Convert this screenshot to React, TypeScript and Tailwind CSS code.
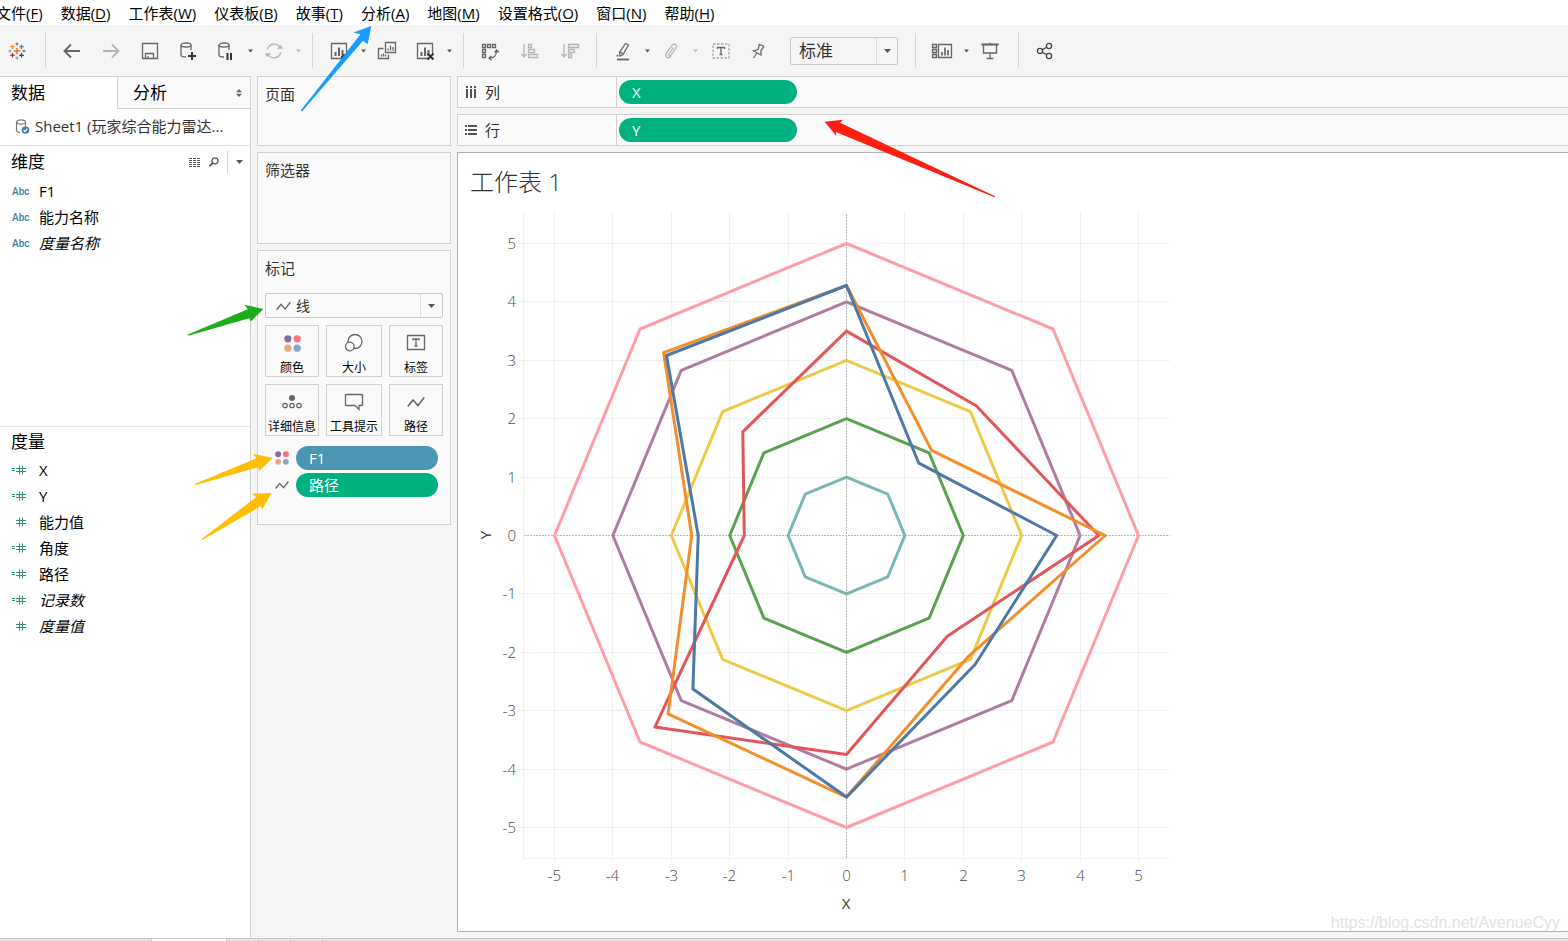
import type { ReactNode } from 'react'

const menus = [
  ['文件', 'F'],
  ['数据', 'D'],
  ['工作表', 'W'],
  ['仪表板', 'B'],
  ['故事', 'T'],
  ['分析', 'A'],
  ['地图', 'M'],
  ['设置格式', 'O'],
  ['窗口', 'N'],
  ['帮助', 'H'],
]

const dimensions = [
  { name: 'F1' },
  { name: '能力名称' },
  { name: '度量名称', generated: true },
]

const measures = [
  { name: 'X', calc: true },
  { name: 'Y', calc: true },
  { name: '能力值' },
  { name: '角度', calc: true },
  { name: '路径', calc: true },
  { name: '记录数', calc: true, generated: true },
  { name: '度量值', generated: true },
]

// radius per axis, counter-clockwise starting from the positive x axis
const series = [
  { color: '#ff9da7', r: [5, 5, 5, 5, 5, 5, 5, 5] },
  { color: '#b07aa1', r: [4, 4, 4, 4, 4, 4, 4, 4] },
  { color: '#edc948', r: [3, 3, 3, 3, 3, 3, 3, 3] },
  { color: '#59a14f', r: [2, 2, 2, 2, 2, 2, 2, 2] },
  { color: '#76b7b2', r: [1, 1, 1, 1, 1, 1, 1, 1] },
  { color: '#e15759', r: [4.32, 3.14, 3.5, 2.51, 1.75, 4.64, 3.75, 2.44] },
  { color: '#f28e2b', r: [4.43, 2.06, 4.28, 4.43, 2.65, 4.32, 4.48, 2.94] },
  { color: '#4e79a7', r: [3.6, 1.75, 4.28, 4.36, 2.54, 3.72, 4.48, 3.12] },
]

const ticks = [-5, -4, -3, -2, -1, 0, 1, 2, 3, 4, 5]
const UNIT = 58.4
const CX = 376.5
const CY = 330.5
const tickX = (v: number) => Math.round(CX - 0.5 + v * UNIT) + 0.5
const tickY = (v: number) => Math.round(CY - 0.5 - v * UNIT) + 0.5

function polygon(r: number[]) {
  return r
    .map((v, i) => {
      const a = (i * Math.PI) / 4
      return `${(CX + Math.cos(a) * v * UNIT).toFixed(1)},${(CY - Math.sin(a) * v * UNIT).toFixed(1)}`
    })
    .join(' ')
}

function Icon({ children, w = 20, h = 20, color = '#666666' }: { children: ReactNode; w?: number; h?: number; color?: string }) {
  return (
    <svg width={w} height={h} viewBox={`0 0 ${w} ${h}`} fill="none" stroke={color} strokeWidth="1.3" aria-hidden="true">
      {children}
    </svg>
  )
}

function Caret({ light = false }: { light?: boolean }) {
  return (
    <svg width="5" height="4" viewBox="0 0 5 4" fill={light ? '#b8b8b8' : '#555555'} aria-hidden="true">
      <path d="M0 .5h5L2.5 3.5z" />
    </svg>
  )
}

function Tool({ label, children }: { label: string; children: ReactNode }) {
  return (
    <button aria-label={label} className="flex h-9 w-9 items-center justify-center">
      {children}
    </button>
  )
}

function More({ label, light }: { label: string; light?: boolean }) {
  return (
    <button aria-label={label} className="flex h-9 w-3 items-center justify-center">
      <Caret light={light} />
    </button>
  )
}

function Separator() {
  return <div className="mx-2 h-[35px] w-px bg-[#d4d4d4]" />
}

function Cylinder() {
  return (
    <>
      <ellipse cx="8" cy="4" rx="5" ry="2" />
      <path d="M3 4v10c0 1.200 2 2 5 2M13 4v5" />
    </>
  )
}

function BarsBox() {
  return (
    <>
      <path d="M13 17.500H2.500v-15h15V13" />
      <path d="M6.500 15v-4M10 15V6.500M13.500 15V9" strokeWidth="2" />
    </>
  )
}

function ColorDots({ size }: { size: number }) {
  return (
    <svg width={size} height={size} viewBox="0 0 16 16" aria-hidden="true">
      <circle cx="3.600" cy="3.600" r="3.400" fill="#86709a" />
      <circle cx="12.400" cy="3.600" r="3.400" fill="#f97186" />
      <circle cx="3.600" cy="12.400" r="3.400" fill="#f2a47c" />
      <circle cx="12.400" cy="12.400" r="3.400" fill="#82a6cd" />
    </svg>
  )
}

function LineIcon({ w = 15, h = 10 }: { w?: number; h?: number }) {
  return (
    <svg width={w} height={h} viewBox="0 0 18 12" fill="none" stroke="#666666" strokeWidth="1.600" aria-hidden="true">
      <path d="M.8 10.500 6 4l5 5.500L17.200 1.500" />
    </svg>
  )
}

function TableauLogo() {
  return (
    <svg width="18" height="18" viewBox="0 0 18 18" fill="none" strokeWidth="1.300" aria-hidden="true">
      <path d="M9 5.800v6.400M5.800 9h6.400" stroke="#e8762c" strokeWidth="1.500" />
      <path d="M4.500 2.500v4.500M2.200 4.700h4.600" stroke="#eb912c" />
      <path d="M13.500 2.500v4.500M11.200 4.700h4.600" stroke="#59879b" />
      <path d="M4.500 11v4.500M2.200 13.300h4.600" stroke="#c72035" />
      <path d="M13.500 11v4.500M11.200 13.300h4.600" stroke="#1f447e" />
      <path d="M9 .5v3M7.500 2h3" stroke="#5b6591" strokeWidth="1" />
      <path d="M9 14.500v3M7.500 16h3" stroke="#7199a6" strokeWidth="1" />
      <path d="M2 7.500v3M.5 9h3" stroke="#7199a6" strokeWidth="1" />
      <path d="M16 7.500v3M14.500 9h3" stroke="#5b6591" strokeWidth="1" />
    </svg>
  )
}

function Toolbar() {
  return (
    <div className="flex h-[51px] shrink-0 items-center">
      <button aria-label="Tableau" className="mr-1 flex h-9 w-[33px] items-center justify-center">
        <TableauLogo />
      </button>
      <Separator />
      <div className="mr-0.5 flex gap-[3px]">
        <Tool label="撤消">
          <Icon><path d="M18 10H3M9 3.500 2.500 10 9 16.500" strokeWidth="1.900" /></Icon>
        </Tool>
        <Tool label="重做">
          <Icon color="#b4b4b4"><path d="M2 10h15M11 3.500l6.500 6.500-6.500 6.500" strokeWidth="1.900" /></Icon>
        </Tool>
        <Tool label="保存">
          <Icon>
            <path d="M2.500 2.500h15v15h-15z" />
            <path d="M5.500 17.500v-5h8v5M8 17.500V15" />
          </Icon>
        </Tool>
      </div>
      <div className="flex gap-0.5">
        <Tool label="新建数据源">
          <Icon>
            <Cylinder />
            <path d="M14 11v8M10 15h8" stroke="#333333" strokeWidth="2" />
          </Icon>
        </Tool>
        <Tool label="暂停自动更新">
          <Icon>
            <Cylinder />
            <path d="M11.500 12v7M15 12v7" stroke="#333333" strokeWidth="2" />
          </Icon>
        </Tool>
      </div>
      <More label="更新选项" />
      <Tool label="运行更新">
        <Icon color="#b4b4b4">
          <path d="M3.300 8.500a7 7 0 0 1 13-1.500M16.700 11.500a7 7 0 0 1-13 1.500" />
          <path d="M13.500 7.500h5L17 4.300zM6.500 12.500h-5L3 15.700z" fill="#b4b4b4" strokeWidth=".5" />
        </Icon>
      </Tool>
      <More label="运行选项" light />
      <Separator />
      <Tool label="新建工作表">
        <Icon>
          <BarsBox />
          <path d="M15 13v6M12 16h6" stroke="#333333" strokeWidth="2" />
        </Icon>
      </Tool>
      <More label="新建选项" />
      <div className="flex gap-0.5">
        <Tool label="复制工作表">
          <Icon>
            <path d="M8.500 1.500h10v10h-10zM6.500 7.500h-5v10h10v-4" />
            <path d="M11 9.500v-2M13.500 9.500v-5M16 9.500V6M4.500 15.500v-2M6.500 15.500v-3M8.500 15.500v-2" />
          </Icon>
        </Tool>
        <Tool label="清除工作表">
          <Icon>
            <BarsBox />
            <path d="m12.500 12.500 6 6M18.500 12.500l-6 6" stroke="#333333" strokeWidth="2" />
          </Icon>
        </Tool>
      </div>
      <More label="清除选项" />
      <Separator />
      <div className="flex gap-1">
        <Tool label="交换行和列">
          <Icon>
            <path d="M2.500 3.500h3v3h-3zM7.500 3.500h3v3h-3zM12.500 3.500h3v3h-3zM2.500 8.500h3v3h-3zM2.500 13.500h3v3h-3z" />
            <path d="M9.500 17c4 0 7-2.500 7-7M14.500 11.500l2.200-2.500 2.200 2.500M11.500 15 9 17l2.500 2.200" />
          </Icon>
        </Tool>
        <Tool label="升序排序">
          <Icon color="#b4b4b4">
            <path d="M4 3v12M1.500 13l2.500 3 2.500-3M8.500 3.500h3v3h-3zM8.500 8.500h6v3h-6zM8.500 13.500h9v3h-9z" />
          </Icon>
        </Tool>
        <Tool label="降序排序">
          <Icon color="#b4b4b4">
            <path d="M4 3v12M1.500 13l2.500 3 2.500-3M8.500 3.500h10v3h-10zM8.500 8.500h6v3h-6zM8.500 13.500h3v3h-3z" />
          </Icon>
        </Tool>
      </div>
      <Separator />
      <Tool label="突出显示">
        <Icon>
          <path d="M12.500 2.500 15.500 4 10 13.500l-3 1.500-.500-3.500zM7 11l3.500 2M3.500 15l2-.500" />
          <path d="M4 18.500h12" strokeWidth="1.800" />
        </Icon>
      </Tool>
      <More label="突出显示选项" />
      <Tool label="分组成员">
        <Icon color="#b4b4b4">
          <path d="M12.500 6.500 8 13c-1 1.500 1 2.500 2 1.200l5-7.200c2-3-2-5.500-4-2.600L5.500 12c-2.300 3.600 2.200 6.500 4.500 3.200" />
        </Icon>
      </Tool>
      <More label="分组选项" light />
      <div className="ml-0.5 flex gap-0.5">
        <Tool label="显示标记标签">
          <Icon>
            <path d="M2 3h16v14H2z" stroke="#a5a5a5" strokeDasharray="2.500 1.500" />
            <path d="M6.500 8V6.500h7V8M10 6.500v7M8.500 13.500h3" />
          </Icon>
        </Tool>
        <Tool label="固定轴">
          <Icon>
            <path d="m9.500 3 5.500 2.500M10.500 3.500l-1.500 5L4.500 10l7.500 4v-4.500l3-4M8 12l-3.500 5" />
          </Icon>
        </Tool>
      </div>
      <div className="relative mr-[9px] ml-[13px]">
        <select
          aria-label="适合"
          className="h-7 w-[108px] appearance-none rounded-xs border border-[#c8c8c8] bg-[#f5f5f5] pl-2 text-[17px] leading-6 text-[#333333]"
        >
          <option>标准</option>
        </select>
        <span className="pointer-events-none absolute inset-y-px right-px flex w-[21px] items-center justify-center border-l border-[#dcdcdc]">
          <svg width="7" height="4" viewBox="0 0 7 4" fill="#555555"><path d="M0 0h7L3.500 4z" /></svg>
        </span>
      </div>
      <Separator />
      <Tool label="智能推荐">
        <Icon w={22}>
          <path d="M7.500 3.500h13v13h-13zM1.500 3.500h4v3h-4zM1.500 8.500h4v3h-4zM1.500 13.500h4v3h-4z" />
          <path d="M11 14.500V11M14 14.500V6.500M17 14.500V9" strokeWidth="1.700" />
        </Icon>
      </Tool>
      <More label="智能推荐选项" />
      <div className="mr-0.5 flex">
        <Tool label="演示模式">
          <Icon>
            <path d="M1.500 3.500h17M3.500 3.500v8.500h13V3.500M10 1.800V3.500M10 12v5.500M6.500 17.500h7" />
            <path d="M1.500 3.500h17" strokeWidth="1.800" />
          </Icon>
        </Tool>
      </div>
      <Separator />
      <Tool label="共享">
        <Icon color="#444444">
          <circle cx="5" cy="10" r="2.600" />
          <circle cx="14" cy="5" r="2.600" />
          <circle cx="14" cy="15" r="2.600" />
          <path d="m7.300 8.800 4.500-2.600M7.300 11.200l4.500 2.600" />
        </Icon>
      </Tool>
    </div>
  )
}

function NumberIcon({ calc }: { calc?: boolean }) {
  return (
    <svg width="15" height="12" viewBox="0 0 15 12" fill="none" stroke="#2f9470" aria-hidden="true">
      {calc && <path d="M0 4.500h3M0 6.500h3" />}
      <path d="M4 4.500h10M4 7.500h10M7.500 1.500v9M10.500 1.500v9" />
    </svg>
  )
}

function Field({ icon, name, generated }: { icon: ReactNode; name: string; generated?: boolean }) {
  return (
    <li className="flex h-[26px] items-center pl-3">
      <span className="flex w-[27px] items-center">{icon}</span>
      <span className={generated ? 'italic' : ''}>{name}</span>
    </li>
  )
}

function DataPane() {
  return (
    <aside className="flex w-[251px] shrink-0 flex-col border-t border-r border-[#d0d0d0] bg-white text-black">
      <div className="flex h-8 text-[17px]">
        <button className="w-[117px] pl-[11px] text-left">数据</button>
        <button className="flex flex-1 items-center justify-between border-b border-l border-[#d0d0d0] bg-[#fafafa] pr-2 pl-[15px]">
          分析
          <svg width="6" height="8" viewBox="0 0 6 8" fill="#5f6b78" aria-hidden="true">
            <path d="M0 3.200h6L3 0zM0 4.800h6L3 8z" />
          </svg>
        </button>
      </div>
      <div className="flex h-[37px] items-center border-b border-[#e2e2e2] pb-0.5 pl-[15px] text-[#333333]">
        <svg width="15" height="17" viewBox="0 0 15 17" fill="none" stroke="#777777" strokeWidth="1.200" aria-hidden="true">
          <ellipse cx="6" cy="4" rx="4.500" ry="2.200" />
          <path d="M1.500 4v8.500c0 1 1.500 1.800 3.500 2M10.500 4v4" />
          <circle cx="10.500" cy="12" r="3.800" fill="#3b7f9b" stroke="none" />
          <path d="m8.600 12 1.400 1.500 2.400-2.800" stroke="white" />
        </svg>
        <span className="ml-[5px]">Sheet1 (玩家综合能力雷达...</span>
      </div>
      <section className="h-[281px] border-b border-[#e2e2e2]">
        <div className="flex h-8 items-center pl-[11px]">
          <h2 className="flex-1 text-[17px]">维度</h2>
          <button aria-label="查看数据">
            <svg width="12" height="9" viewBox="0 0 12 9" fill="none" stroke="#555555" aria-hidden="true">
              <path d="M0 .5h12M0 2.500h12M0 4.500h12M0 6.500h12M0 8.500h12" strokeDasharray="3 1" strokeDashoffset="0" />
            </svg>
          </button>
          <button aria-label="查找字段" className="ml-2">
            <svg width="10" height="10" viewBox="0 0 10 10" fill="none" stroke="#555555" strokeWidth="1.300" aria-hidden="true">
              <circle cx="6" cy="3.800" r="3" />
              <path d="M3.800 6 .5 9.300" strokeWidth="1.700" />
            </svg>
          </button>
          <span className="ml-2 h-[22px] w-px bg-[#d0d0d0]" />
          <button aria-label="菜单" className="mr-[7px] ml-2">
            <svg width="7" height="4" viewBox="0 0 7 4" fill="#555555"><path d="M0 0h7L3.500 4z" /></svg>
          </button>
        </div>
        <ul>
          {dimensions.map((d) => (
            <Field
              key={d.name}
              name={d.name}
              generated={d.generated}
              icon={<span className="font-[Roboto] text-[10px] font-medium text-[#3b7f9b]">Abc</span>}
            />
          ))}
        </ul>
      </section>
      <section>
        <h2 className="flex h-[30px] items-center pl-[11px] text-[17px]">度量</h2>
        <ul>
          {measures.map((m) => (
            <Field key={m.name} name={m.name} generated={m.generated} icon={<NumberIcon calc={m.calc} />} />
          ))}
        </ul>
      </section>
    </aside>
  )
}

function Card({ title, className, children }: { title: string; className: string; children?: ReactNode }) {
  return (
    <section className={`border border-[#d0d0d0] bg-[#fafafa] px-[7px] py-1.5 ${className}`}>
      <h2 className="leading-[22px]">{title}</h2>
      {children}
    </section>
  )
}

function MarkButton({ label, children }: { label: string; children: ReactNode }) {
  return (
    <button className="flex h-[52px] flex-col items-center border border-[#d0d0d0] bg-[#fafafa] text-xs whitespace-nowrap text-black">
      <span className="flex h-[34px] items-center">{children}</span>
      <span className="leading-4">{label}</span>
    </button>
  )
}

function Cards() {
  return (
    <div className="flex w-[194px] shrink-0 flex-col gap-1.5 text-[#333333]">
      <Card title="页面" className="h-[70px]" />
      <Card title="筛选器" className="h-[92px]" />
      <Card title="标记" className="h-[275px]">
        <div className="relative mt-3.5">
          <select
            aria-label="标记类型"
            className="block h-[25px] w-full appearance-none rounded-xs border border-[#c8c8c8] bg-[#fafafa] pl-[30px] text-sm leading-5"
          >
            <option>线</option>
          </select>
          <span className="pointer-events-none absolute inset-y-0 left-[11px] flex items-center">
            <LineIcon />
          </span>
          <span className="pointer-events-none absolute inset-y-px right-px flex w-[22px] items-center justify-center border-l border-[#dcdcdc]">
            <svg width="7" height="4" viewBox="0 0 7 4" fill="#555555"><path d="M0 0h7L3.500 4z" /></svg>
          </span>
        </div>
        <div className="mt-[7px] grid grid-cols-[54px_56px_54px] justify-between gap-y-[7px]">
          <MarkButton label="颜色"><ColorDots size={17} /></MarkButton>
          <MarkButton label="大小">
            <Icon>
              <circle cx="11" cy="8.500" r="7" />
              <circle cx="5.800" cy="13.500" r="4.300" fill="#fafafa" />
            </Icon>
          </MarkButton>
          <MarkButton label="标签">
            <Icon>
              <path d="M1.500 2.500h17v14h-17z" />
              <path d="M7 7.500V6h6v1.500M10 6v7M8.500 13h3" />
            </Icon>
          </MarkButton>
          <MarkButton label="详细信息">
            <Icon>
              <circle cx="10" cy="6" r="3" fill="#666666" stroke="none" />
              <circle cx="3" cy="13.500" r="2.200" />
              <circle cx="10" cy="13.500" r="2.200" />
              <circle cx="17" cy="13.500" r="2.200" />
            </Icon>
          </MarkButton>
          <MarkButton label="工具提示">
            <Icon>
              <path d="M2.500 2.500h15a1 1 0 0 1 1 1v9a1 1 0 0 1-1 1h-2.500v4l-4-4H2.500a1 1 0 0 1-1-1v-9a1 1 0 0 1 1-1z" />
            </Icon>
          </MarkButton>
          <MarkButton label="路径"><LineIcon w={18} h={12} /></MarkButton>
        </div>
        <ul className="mt-2.5 flex flex-col gap-[3px] pr-[5px] pl-2.5 text-white">
          <li className="flex items-center gap-[7px]">
            <ColorDots size={14} />
            <button className="h-6 flex-1 rounded-full bg-[#4a96b3] pl-[13px] text-left">F1</button>
          </li>
          <li className="flex items-center gap-[7px]">
            <LineIcon w={14} h={10} />
            <button className="h-6 flex-1 rounded-full bg-[#00b180] pl-[13px] text-left">路径</button>
          </li>
        </ul>
      </Card>
    </div>
  )
}

function Shelf({ label, field, icon }: { label: string; field: string; icon: ReactNode }) {
  return (
    <div className="flex h-8 items-center border border-r-0 border-[#d0d0d0] bg-[#fafafa] text-[#333333]">
      <div className="flex h-full w-[159px] items-center gap-2 border-r border-[#d0d0d0] pl-1.5">
        {icon}
        {label}
      </div>
      <button className="ml-0.5 h-6 w-[178px] rounded-full bg-[#00b180] pl-[13px] text-left text-white">{field}</button>
    </div>
  )
}

function RadarChart() {
  return (
    <svg width="710" height="715" viewBox="0 0 710 715" className="ml-3 shrink-0" role="img" aria-label="工作表 1">
      <g stroke="#f0f0f0" fill="none">
        <path d="M53.500 7v646.500H700" />
        {ticks.map((t) => (
          <g key={t}>
            {t !== 0 && <path d={`M${tickX(t)} 7V657`} />}
            {t !== 0 && <path d={`M49 ${tickY(t)}H700`} />}
          </g>
        ))}
      </g>
      <path d="M376.500 9V653M54 330.500H700" stroke="#b8b8b8" strokeDasharray="2 1" />
      <g fill="none" strokeWidth="3" strokeLinejoin="round">
        {series.map((s) => (
          <polygon key={s.color} points={polygon(s.r)} stroke={s.color} />
        ))}
      </g>
      <g className="fill-[#4a4a4a] text-[15px] font-light">
        {ticks.map((t) => (
          <text key={t} x={tickX(t)} y="676" textAnchor="middle">{t}</text>
        ))}
        {ticks.map((t) => (
          <text key={t} x="46" y={tickY(t) + 5} textAnchor="end">{t}</text>
        ))}
      </g>
      <g className="fill-[#333333] text-[15px]" textAnchor="middle">
        <text x="376" y="704">X</text>
        <text transform="translate(21 330) rotate(-90)">Y</text>
      </g>
    </svg>
  )
}

// Coloured arrows drawn over the window
function Arrows() {
  return (
    <svg width="1000" height="550" viewBox="0 0 1000 550" className="pointer-events-none absolute top-0 left-0" aria-hidden="true">
      <path d="M371.300 26 353.500 32.500l7 1.800L300.700 110.500l1.300 1 61-70.700 4.700 3.500z" fill="#1a9cff" />
      <path d="M824.700 121.700 843 119.800l-3 3 155 73.500-.500 1-158.700-65.300.700 4.300z" fill="#ff1e10" />
      <path d="M263.500 309 244.300 304.800l3.500 4.500-60 25.300.500 1.200 61-17.500 1.500 3.200z" fill="#1cad19" />
      <path d="M272.500 458 253 453.800l3.500 4.500-61.800 25.700.500 1.200L258 467.200l1.300 3.700z" fill="#ffbf00" />
      <path d="M271.500 493 252 493.500l4 3.700-54.300 41.800.800 1 58.500-34 1.300 3.300z" fill="#ffbf00" />
    </svg>
  )
}

export default function App() {
  return (
    <div className="relative flex h-screen flex-col overflow-hidden bg-[#f5f5f5] font-['Open_Sans','Noto_Sans_CJK_SC',sans-serif] text-[15px]">
      <nav className="-ml-1 flex h-[25px] shrink-0 items-center gap-[18px] bg-white pt-0.5 whitespace-nowrap text-black">
        {menus.map(([name, key]) => (
          <button key={key}>
            {name}(<span className="underline underline-offset-2">{key}</span>)
          </button>
        ))}
      </nav>
      <Toolbar />
      <div className="flex min-h-0 flex-1 gap-1.5">
        <DataPane />
        <Cards />
        <main className="flex min-w-0 flex-1 flex-col gap-1.5 pb-1.5">
          <Shelf
            label="列"
            field="X"
            icon={
              <svg width="13" height="12" viewBox="0 0 13 12" fill="none" stroke="#555555" strokeWidth="2" aria-hidden="true">
                <path d="M3 0v2M3 3v9M7 0v2M7 3v9M11 0v2M11 3v9" />
              </svg>
            }
          />
          <Shelf
            label="行"
            field="Y"
            icon={
              <svg width="13" height="12" viewBox="0 0 13 12" fill="none" stroke="#555555" strokeWidth="2" aria-hidden="true">
                <path d="M1 2h2M4 2h9M1 6h2M4 6h9M1 10h2M4 10h9" />
              </svg>
            }
          />
          <section className="flex min-h-0 flex-1 flex-col overflow-hidden border border-r-0 border-[#b0b0b0] bg-white">
            <h1 className="flex h-[52px] shrink-0 items-center pt-1.5 pl-3 text-2xl font-light text-[#333333]">工作表 1</h1>
            <RadarChart />
          </section>
        </main>
      </div>
      <footer className="flex h-[3px] shrink-0 border-t border-[#c8c8c8] bg-[#e6e6e6]">
        <div className="w-[152px] border-r border-[#c8c8c8]" />
        <div className="w-[75px] border-r border-[#c8c8c8] bg-white" />
        <div className="w-8 border-r border-[#c8c8c8]" />
        <div className="w-8 border-r border-[#c8c8c8]" />
        <div className="w-8 border-r border-[#c8c8c8]" />
      </footer>
      <Arrows />
      <span className="absolute right-2 bottom-1.5 font-['Liberation_Sans',sans-serif] text-base text-[#e2e2e2]">
        https://blog.csdn.net/AvenueCyy
      </span>
    </div>
  )
}
